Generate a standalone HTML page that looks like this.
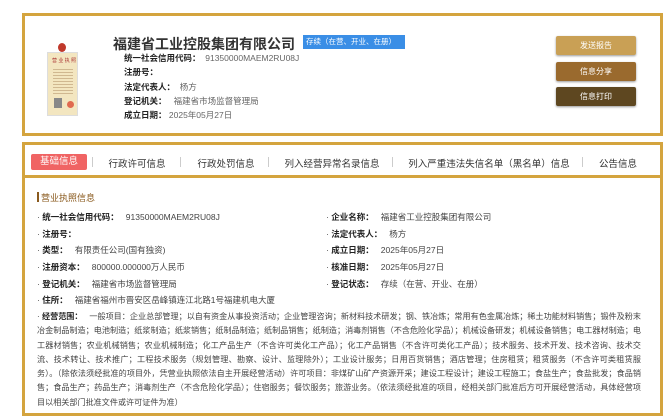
<!DOCTYPE html>
<html><head><meta charset="utf-8"><style>
body{margin:0;width:665px;height:409px;background:#fff;font-family:"Liberation Sans","Noto Sans CJK SC",sans-serif;color:#333;overflow:hidden;position:relative}
.a{position:absolute;white-space:nowrap}
.card{position:absolute;left:22px;top:13px;width:641px;height:123px;border:3px solid #d4a43e;box-sizing:border-box}
.lb{font-weight:bold;color:#222}
.v{color:#666}
.t{font-size:8.5px}
.btn{position:absolute;left:556px;width:80px;height:19px;color:#fff;font-size:8px;text-align:center;line-height:19px;border-radius:2px;box-shadow:0 1px 2px #999}
.tabs{position:absolute;left:22px;top:142px;width:641px;height:36px;border:3px solid #d4a43e;box-sizing:border-box}
.tab{position:absolute;top:156px;font-size:9.5px;color:#333;transform:translateX(-50%);white-space:nowrap}
.sep{position:absolute;top:157px;width:1px;height:10px;background:#ccc}
.content{position:absolute;left:22px;top:176px;width:641px;height:240px;border:3px solid #d4a43e;border-top:none;box-sizing:border-box}
.row{position:absolute;font-size:8.5px;white-space:nowrap;color:#444}
.row b{color:#222}
.scope{position:absolute;left:37px;top:310px;width:604px;font-size:8.1px;line-height:14.3px;color:#444;text-align:justify}
</style></head><body>
<div class="card"></div>
<div class="a" style="left:47px;top:52px;width:31px;height:64px;background:#f3e6c0;border:1px solid #ddd;box-sizing:border-box"></div>
<div class="a" style="left:58px;top:43px;width:8px;height:9px;background:#c0392b;border-radius:50%"></div>
<div class="a" style="left:52px;top:57px;font-size:5px;color:#a33">营 业 执 照</div>
<div class="a" style="left:53px;top:67px;width:20px;height:28px;background:repeating-linear-gradient(#f3e6c0 0 2px,#b89a70 2px 3px);opacity:.6"></div>
<div class="a" style="left:54px;top:98px;width:8px;height:10px;background:#888"></div>
<div class="a" style="left:67px;top:101px;width:7px;height:7px;border-radius:50%;background:#e06a50"></div>

<div class="a" style="left:113px;top:34px;font-size:14px;font-weight:bold;color:#333">福建省工业控股集团有限公司</div>
<div class="a" style="left:303px;top:35px;width:102px;height:14px;background:#3a8ee6;color:#fff;font-size:7.5px;line-height:14px;padding-left:3px;box-sizing:border-box">存续（在营、开业、在册）</div>
<div class="a t" style="left:124px;top:52px"><span class="lb">统一社会信用代码：</span>&nbsp;&nbsp;<span class="v">91350000MAEM2RU08J</span></div>
<div class="a t lb" style="left:124px;top:66px">注册号：</div>
<div class="a t" style="left:124px;top:81px"><span class="lb">法定代表人：</span>&nbsp;&nbsp;<span class="v">杨方</span></div>
<div class="a t" style="left:124px;top:95px"><span class="lb">登记机关：</span>&nbsp;&nbsp;&nbsp;<span class="v">福建省市场监督管理局</span></div>
<div class="a t" style="left:124px;top:109px"><span class="lb">成立日期：</span>&nbsp;<span class="v">2025年05月27日</span></div>

<div class="btn" style="top:36px;background:#c9a055">发送报告</div>
<div class="btn" style="top:62px;background:#9a6a2e">信息分享</div>
<div class="btn" style="top:87px;background:#5e4720">信息打印</div>

<div class="tabs"></div>
<div class="a" style="left:31px;top:154px;width:56px;height:16px;background:#f06464;color:#fff;font-size:9.5px;line-height:16px;text-align:center;border-radius:2px">基础信息</div>
<div class="sep" style="left:92px"></div>
<div class="tab" style="left:137px">行政许可信息</div>
<div class="sep" style="left:180px"></div>
<div class="tab" style="left:226px">行政处罚信息</div>
<div class="sep" style="left:268px"></div>
<div class="tab" style="left:332px">列入经营异常名录信息</div>
<div class="sep" style="left:392px"></div>
<div class="tab" style="left:489px">列入严重违法失信名单（黑名单）信息</div>
<div class="sep" style="left:582px"></div>
<div class="tab" style="left:618px">公告信息</div>

<div class="content"></div>
<div class="a" style="left:37px;top:192px;width:2px;height:10px;background:#8a5a1e"></div>
<div class="a" style="left:41px;top:191px;font-size:9px;color:#8a5a1e">营业执照信息</div>

<div class="row" style="left:37px;top:211px">· <b>统一社会信用代码：</b>&nbsp;&nbsp;&nbsp;91350000MAEM2RU08J</div>
<div class="row" style="left:37px;top:228px">· <b>注册号：</b></div>
<div class="row" style="left:37px;top:244px">· <b>类型：</b>&nbsp;&nbsp;&nbsp;有限责任公司(国有独资)</div>
<div class="row" style="left:37px;top:261px">· <b>注册资本：</b>&nbsp;&nbsp;&nbsp;800000.000000万人民币</div>
<div class="row" style="left:37px;top:278px">· <b>登记机关：</b>&nbsp;&nbsp;&nbsp;福建省市场监督管理局</div>
<div class="row" style="left:37px;top:294px">· <b>住所：</b>&nbsp;&nbsp;&nbsp;福建省福州市晋安区岳峰镇连江北路1号福建机电大厦</div>

<div class="row" style="left:326px;top:211px">· <b>企业名称：</b>&nbsp;&nbsp;&nbsp;福建省工业控股集团有限公司</div>
<div class="row" style="left:326px;top:228px">· <b>法定代表人：</b>&nbsp;&nbsp;&nbsp;杨方</div>
<div class="row" style="left:326px;top:244px">· <b>成立日期：</b>&nbsp;&nbsp;&nbsp;2025年05月27日</div>
<div class="row" style="left:326px;top:261px">· <b>核准日期：</b>&nbsp;&nbsp;&nbsp;2025年05月27日</div>
<div class="row" style="left:326px;top:278px">· <b>登记状态：</b>&nbsp;&nbsp;&nbsp;存续（在营、开业、在册）</div>

<div class="scope">· <b style="color:#222">经营范围：</b>&nbsp;&nbsp;&nbsp;一般项目：企业总部管理；以自有资金从事投资活动；企业管理咨询；新材料技术研发；钢、铁冶炼；常用有色金属冶炼；稀土功能材料销售；锻件及粉末冶金制品制造；电池制造；纸浆制造；纸浆销售；纸制品制造；纸制品销售；纸制造；消毒剂销售（不含危险化学品）；机械设备研发；机械设备销售；电工器材制造；电工器材销售；农业机械销售；农业机械制造；化工产品生产（不含许可类化工产品）；化工产品销售（不含许可类化工产品）；技术服务、技术开发、技术咨询、技术交流、技术转让、技术推广；工程技术服务（规划管理、勘察、设计、监理除外）；工业设计服务；日用百货销售；酒店管理；住房租赁；租赁服务（不含许可类租赁服务）。（除依法须经批准的项目外，凭营业执照依法自主开展经营活动）许可项目：非煤矿山矿产资源开采；建设工程设计；建设工程施工；食盐生产；食盐批发；食品销售；食品生产；药品生产；消毒剂生产（不含危险化学品）；住宿服务；餐饮服务；旅游业务。（依法须经批准的项目，经相关部门批准后方可开展经营活动，具体经营项目以相关部门批准文件或许可证件为准）</div>
</body></html>
